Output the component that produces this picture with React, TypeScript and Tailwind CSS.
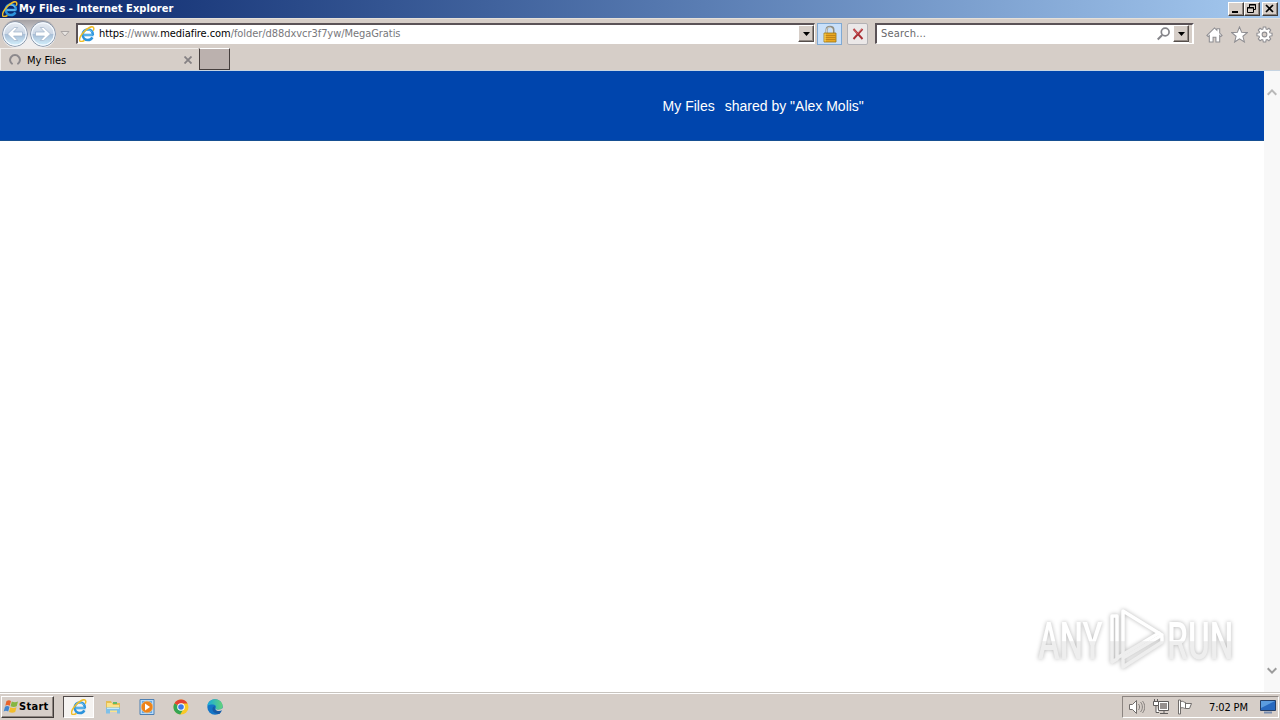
import React from 'react';
import { clsx } from 'clsx';

const ui = "font-['DejaVu_Sans_Condensed','DejaVu_Sans',sans-serif] text-[11px] leading-[14px] whitespace-pre";

const IELogo: React.FC<{ className?: string }> = ({ className }) => (
  <svg viewBox="0 0 16 16" className={className} fill="none">
    <path d="M3.400 9h11.100M13.400 11.300c-.9 1.700-2.500 2.700-4.500 2.700-3 0-5.200-2.200-5.200-5.200 0-3.100 2.200-5.300 5.200-5.300 2.900 0 4.900 2 5 5.500" stroke="#2c93dc" strokeWidth="2.500" />
    <path d="M4.200 7c.7-1.900 2.300-3.100 4.500-3.100 2 0 3.400.9 4.200 2.400M4.500 9h9" stroke="#8ad6f7" strokeWidth=".9" />
    <path d="M5.500 14.300c-2.300 1.400-4.200 1.500-4.700.5C.1 13.100 1.900 9 5.600 5.200 9.100 1.700 12.800.1 14.200 1.200c.8.7.7 2.100 0 3.600" stroke="#efbd28" strokeWidth="1.500" />
  </svg>
);

const NavArrow: React.FC<{ forward?: boolean }> = ({ forward }) => (
  <svg viewBox="0 0 26 26" className={clsx('size-[26px] shrink-0', forward && '-scale-x-100')}>
    <defs>
      <linearGradient id="orb" x1="0" y1="0" x2="0" y2="1">
        <stop offset="0" stopColor="#e9edf3" />
        <stop offset=".48" stopColor="#cdd8e6" />
        <stop offset=".52" stopColor="#a9bfd7" />
        <stop offset="1" stopColor="#d6f3ff" />
      </linearGradient>
    </defs>
    <circle cx="13" cy="13" r="12.300" fill="url(#orb)" stroke="#8592a5" />
    <circle cx="13" cy="13" r="11.200" fill="none" stroke="#f5faff" strokeWidth="1.200" />
    <path d="M5.500 13l6.800-6.500h3.400l-4.200 4.500h9v4h-9l4.200 4.500h-3.400z" fill="#fff" stroke="#9fb2c8" strokeWidth=".7" />
  </svg>
);

const DropButton = () => (
  <div className="flex h-[17px] w-4 shrink-0 items-center justify-center border border-t-white border-l-white border-r-[#554e4b] border-b-[#554e4b] bg-[#d6cec8] shadow-[inset_-1px_-1px_#938b86]">
    <svg viewBox="0 0 7 4" className="h-1 w-[7px]"><path d="M0 0h7L3.500 4z" fill="#000" /></svg>
  </div>
);

const WindowButton: React.FC<{ children: React.ReactNode; className?: string }> = ({ children, className }) => (
  <button className={clsx('h-[14px] w-4 border border-t-white border-l-white border-r-[#403b38] border-b-[#403b38] bg-[#d6cec8] shadow-[inset_-1px_-1px_#8d8580]', className)}>
    <svg viewBox="0 0 14 12" className="h-3 w-[14px]" fill="none" stroke="#000">{children}</svg>
  </button>
);

const TitleBar = () => (
  <header className="flex h-[18px] items-center bg-gradient-to-r from-[#0a246a] to-[#a6caf0] px-[2px]">
    <IELogo className="mr-px size-4" />
    <span className={clsx(ui, 'w-[160px] font-bold tracking-[0.06px] text-white')}>My Files - Internet Explorer</span>
    <div className="ml-auto flex">
      <WindowButton><path d="M3 9h6" strokeWidth="2" /></WindowButton>
      <WindowButton>
        <path d="M4.500 4V1.500h6v5H9M4 2h7M2.500 4.500h6v5h-6zM2 5h7" />
      </WindowButton>
      <WindowButton className="ml-[2px]"><path d="M3 2l7 7M10 2L3 9" strokeWidth="1.700" /></WindowButton>
    </div>
  </header>
);

const Lock = () => (
  <svg viewBox="0 0 16 18" className="h-[18px] w-4">
    <path d="M4.500 9V5c0-4.200 7-4.200 7 0v4" fill="none" stroke="#8d8c83" strokeWidth="2" />
    <path d="M4.500 8V5c0-3.600 6-3.600 6 0v3" fill="none" stroke="#f0efe5" strokeWidth=".7" />
    <path d="M2 8h12v9H2z" fill="#e9a824" stroke="#9b7313" strokeWidth=".8" />
    <path d="M2.500 10.500h11M2.500 12.500h11M2.500 14.500h11" stroke="#b87c15" strokeWidth=".8" />
    <path d="M3 8.500v8" stroke="#fbdc69" />
  </svg>
);

const Toolbar = () => (
  <div className="flex h-[30px] items-start border-t border-[#e5e0d9] pt-1">
    <div className="-mt-[3px] ml-[2px] flex h-7 gap-[2px] rounded-[14px] bg-gradient-to-b from-[#a5a2a5] to-[#f0eeee] to-70% pt-px">
      <NavArrow />
      <NavArrow forward />
    </div>
    <svg viewBox="0 0 10 6" className="mt-2 ml-[4px] h-[6px] w-[10px]"><path d="M1 .5h8l-4 4.500z" fill="#e8e4e1" stroke="#aaa5a4" /></svg>
    <div className="ml-[6px] flex h-[21px] w-[739px] border-t-2 border-r border-b border-l-2 border-t-[#5b5357] border-r-white border-b-white border-l-[#5b5357] bg-white">
      <IELogo className="mt-px ml-px size-4" />
      <span className={clsx(ui, 'mt-[2px] ml-1 tracking-[-0.06px] text-[#77777b]')}>
        <span className="text-black">https</span>://www.<span className="text-black">mediafire.com</span>/folder/d88dxvcr3f7yw/MegaGratis
      </span>
      <div className="ml-auto"><DropButton /></div>
    </div>
    <div className="ml-[2px] flex h-[22px] w-[25px] items-center justify-center border border-[#80a9d3] bg-[#c9e0fa]"><Lock /></div>
    <div className="ml-[5px] flex h-[22px] w-[21px] items-center justify-center rounded-[2px] border border-[#b3b1b4] bg-[#ebe8e8]">
      <svg viewBox="0 0 12 12" className="size-3" fill="none">
        <path d="M1.500 1l9 10M10.500 1l-9 10" stroke="#a92f35" strokeWidth="1.900" />
        <path d="M1.500 1l4 4.500L10 1" stroke="#df7474" strokeWidth=".8" />
      </svg>
    </div>
    <div className="ml-[7px] flex h-[21px] w-[319px] border-t-2 border-r-2 border-b border-l-2 border-t-[#5b5357] border-r-white border-b-white border-l-[#5b5357] bg-white">
      <span className={clsx(ui, 'mt-[2px] ml-1 tracking-[0.2px] text-[#68686b]')}>Search...</span>
      <svg viewBox="0 0 16 16" className="mt-px mr-px ml-auto size-4" fill="none" stroke="#85858a" strokeWidth="1.700">
        <circle cx="9.200" cy="6" r="3.900" />
        <path d="M6.200 9l-4.500 4.500" strokeWidth="2" />
      </svg>
      <DropButton />
      <div className="w-[3px] bg-[#d6cec8]" />
    </div>
    <div className="mt-[3px] ml-[12px] flex gap-2">
      <svg viewBox="0 0 18 18" className="size-[17px]" fill="#fff" stroke="#8e8d91" strokeWidth="1.100">
        <path d="M1 10l8-8 2.500 2.500V3h3v4.500L17 10l-1.300 1.200-1.200-1.200v7h-4v-5h-3v5h-4v-7l-1.200 1.200z" />
      </svg>
      <svg viewBox="0 0 18 18" className="size-[17px]" fill="#fff" stroke="#8e8d91" strokeWidth="1.100">
        <path d="M9 1l2.300 5.700 6 .3-4.700 3.900 1.600 6L9 13.500 3.800 17l1.600-6.100L.7 7l6-.3z" />
      </svg>
      <svg viewBox="0 0 18 18" className="size-[17px]" fill="#fff" stroke="#8e8d91" strokeWidth="1.100">
        <path d="M7.700 1h2.600l.4 2.300 1.100.4 1.900-1.300 1.900 1.900-1.300 1.900.4 1.100 2.300.4v2.600l-2.300.4-.4 1.100 1.300 1.900-1.900 1.900-1.900-1.300-1.100.4-.4 2.300H7.700l-.4-2.300-1.100-.4-1.900 1.300-1.900-1.900 1.300-1.900-.4-1.100L1 10.300V7.700l2.300-.4.4-1.100-1.300-1.900 1.900-1.900 1.900 1.300 1.100-.4z" />
        <circle cx="9" cy="9" r="2.500" fill="#d6cec8" />
      </svg>
    </div>
  </div>
);

const TabStrip = () => (
  <div className="flex h-[23px] border-b border-[#c6d4e2]">
    <div className="flex h-[22px] w-[198px] items-center border-t border-l border-[#f1eeeb] pt-px pl-2">
      <svg viewBox="0 0 12 12" className="size-3" fill="none">
        <path d="M3.600 10.200A4.900 4.900 0 1 1 8.400 10.200" stroke="#8c898c" strokeWidth="2" />
      </svg>
      <span className={clsx(ui, 'mt-px ml-[6px] text-black')}>My Files</span>
      <svg viewBox="0 0 8 8" className="mr-[6px] ml-auto size-2" stroke="#858184" strokeWidth="1.800"><path d="M.5.5l7 7M7.500.5l-7 7" /></svg>
    </div>
    <div className="ml-px h-[22px] w-[31px] border border-t-white border-r-[#453e3d] border-b-[#453e3d] border-l-[#453e3d] bg-[#bbb1ae]" />
  </div>
);

const Chevron: React.FC<{ down?: boolean }> = ({ down }) => (
  <svg viewBox="0 0 10 7" className={clsx('h-[7px] w-[10px]', down && 'rotate-180')} fill="none" stroke={down ? '#9c9c9c' : '#b8b8b8'} strokeWidth="2"><path d="M.7 5.700L5 1.400l4.300 4.300" /></svg>
);

const Watermark = () => (
  <svg viewBox="0 0 250 82" className="absolute right-0 bottom-[11px] h-[82px] w-[250px] [filter:drop-shadow(0_0_2px_#b5b5b5)]">
    <defs>
      <linearGradient id="mark" x1="0" y1="0" x2="0" y2="82" gradientUnits="userSpaceOnUse">
        <stop offset=".51" stopColor="#fff" />
        <stop offset=".52" stopColor="#eee" />
      </linearGradient>
      <linearGradient id="letters" x1="0" y1="-60" x2="0" y2="22" gradientUnits="userSpaceOnUse">
        <stop offset=".51" stopColor="#fff" />
        <stop offset=".52" stopColor="#eee" />
      </linearGradient>
    </defs>
    <g fill="url(#letters)" className="font-['Roboto','Liberation_Sans',sans-serif] text-[52px] font-medium">
      <text transform="translate(8 60) scale(.63 1)">ANY</text>
      <text transform="translate(137 60) scale(.64 1)">RUN</text>
    </g>
    <g fill="none" stroke="url(#mark)" strokeWidth="3.500" strokeLinejoin="round" strokeLinecap="round">
      <path d="M93 56V12l39 24-39 23" />
      <path d="M86 17h-4v46l5-3" />
      <path d="M87 17v42l42-25M93 68l39-25v-5M93 61v7" />
    </g>
  </svg>
);

const SharedFolder = () => (
  <main className="relative flex h-[621px] bg-white">
    <div className="flex-1">
      <div className="h-[70px] border-b border-[#164f92] bg-[#0045ad] pt-[26px] pl-[662.6px] font-['Liberation_Sans',Arial,sans-serif] text-[14px] leading-[18px] text-white">
        <span>My Files</span>
        <span className="ml-[10px]">shared by "Alex Molis"</span>
      </div>
    </div>
    <div className="flex w-4 flex-col items-center justify-between bg-[#f8f8f8] py-[18px]">
      <Chevron />
      <Chevron down />
    </div>
    <Watermark />
  </main>
);

const TaskbarIcons = () => (
  <div className="ml-[9px] flex items-center">
    <div className="flex h-[22px] w-[31px] items-center justify-center border border-t-[#514b4a] border-r-white border-b-white border-l-[#514b4a] bg-[#f5f3f1]">
      <IELogo className="size-4" />
    </div>
    <svg viewBox="0 0 18 18" className="ml-[10px] size-[18px]">
      <path d="M2 3h5l1 2h8v9H2z" fill="#e4bd52" />
      <path d="M3 5h5l1 2h6v7H3z" fill="#fbe38b" />
      <path d="M9 4h4v2H9z" fill="#61b969" />
      <path d="M2 9.500h14v6h-3v-3H6v3H2z" fill="#7fc0e8" />
      <path d="M3 10.500h12" stroke="#c5e9fb" />
    </svg>
    <svg viewBox="0 0 18 18" className="ml-[16px] size-[18px]">
      <path d="M2 1.500h14v15H2z" fill="#b6dafa" stroke="#4e80b3" />
      <path d="M4 3h10v12H4z" fill="#6baae4" />
      <circle cx="9" cy="9" r="5.800" fill="#ed8219" stroke="#f5ba70" strokeWidth=".7" />
      <path d="M7 5.500l5 3.500-5 3.500z" fill="#fff" />
    </svg>
    <svg viewBox="0 0 18 18" className="ml-[16px] size-[18px]">
      <circle cx="9" cy="9" r="7.500" fill="#f9c927" />
      <path d="M9 9L2.500 5.200a7.500 7.500 0 0 0 5.700 11.300l3.500-6z" fill="#35a553" />
      <path d="M9 9L2.500 5.200a7.500 7.500 0 0 1 13 .2H9z" fill="#e34133" />
      <circle cx="9" cy="9" r="3.800" fill="#fff" />
      <circle cx="9" cy="9" r="2.800" fill="#3d79e8" />
    </svg>
    <svg viewBox="0 0 18 18" className="ml-[16px] size-[18px]">
      <defs>
        <linearGradient id="wave" x1="0" y1="0" x2="1" y2="0">
          <stop stopColor="#18a9dd" />
          <stop offset="1" stopColor="#63d478" />
        </linearGradient>
      </defs>
      <circle cx="9" cy="9" r="7.700" fill="#1475c7" />
      <path d="M1.400 8C2-1 16-1 16.700 8c.1 2.500-2 3.800-4.200 3.800-2 0-3.500-.6-3-1.400 1-1.500.2-3.800-2.500-3.800C4 6.600 2 7.200 1.400 8z" fill="url(#wave)" />
      <path d="M9 8c-1.200 2.200.8 5 4 5 1.400 0 2.300-.3 3-.7L13.500 16C9 16 6 13.500 6.500 10.500 6.800 9 8 8 9 8z" fill="#175aa5" />
      <path d="M9.300 8.500c-1 2 .8 3.300 3.200 3.300 1.700 0 3-.5 4-1.700l1 2.200h-1.400c-.9.500-2 .8-3.200.8-2.800 0-4.500-2.500-3.600-4.600z" fill="#d6cec8" />
    </svg>
  </div>
);

const Tray = () => (
  <div className="mr-px ml-auto flex h-[22px] w-[157px] items-center border border-t-[#8c8581] border-r-white border-b-white border-l-[#8c8581] pl-[6px]">
    <svg viewBox="0 0 16 16" className="size-4" fill="none" stroke="#716d6b">
      <path d="M.5 5.500h3l4-4v13l-4-4h-3z" fill="#fff" />
      <path d="M9.500 5c1.500 2 1.500 4 0 6M11.500 3c2.500 3 2.500 7 0 10M13.500 2c3 4 3 8 0 12" strokeWidth=".8" />
    </svg>
    <svg viewBox="0 0 16 16" className="ml-2 size-4" stroke="#5e5b5a">
      <path d="M5.500 2.500h10v9h-10z" fill="#fff" />
      <path d="M7 4h7v6H7z" fill="#96908e" stroke="none" />
      <path d="M7 14.500h8M11 12v2" />
      <path d="M.5 2.500h5v4h-5zM1.500 0v2.500M4.500 0v2.500M3 6.500v7h3" fill="#fff" />
    </svg>
    <svg viewBox="0 0 16 16" className="ml-2 size-4" fill="#fff" stroke="#716d6b">
      <path d="M1.500 1h2v14h-2zM3.500 2.500c3-1 3 1 5 1v6c-2 0-2-1.500-5-.5zM8.500 4.500h6l-2 5h-4" />
    </svg>
    <span className={clsx(ui, 'mt-px ml-4 w-[46px] tracking-[-0.15px] text-black')}>7:02 PM</span>
    <svg viewBox="0 0 16 14" className="ml-[5px] h-[14px] w-4">
      <path d="M.5.500h15v10H.5z" fill="#2869bf" stroke="#253f67" />
      <path d="M1 1h14L1 8z" fill="#5b9cdf" />
      <path d="M4 12.500h8" stroke="#778caf" strokeWidth="2" />
    </svg>
  </div>
);

const Taskbar = () => (
  <footer className="flex h-7 items-center border-t border-[#c8c4bf] pt-px shadow-[inset_0_1px_white]">
    <button className="ml-px flex h-[22px] w-[53px] items-center border border-t-white border-r-[#403b38] border-b-[#403b38] border-l-white pl-px shadow-[inset_-1px_-1px_#8d8580]">
      <svg viewBox="0 0 16 16" className="size-4">
        <path d="M3.500 2c2-1 3-1 4.500 0L6.800 6.700c-2-1-3-1-4.500 0z" fill="#e9642b" />
        <path d="M8.800 2.500c2 1 4 1 6.200 0l-1.300 4.700c-2 1-4 1-6.200 0z" fill="#85b641" />
        <path d="M2 7.700c1.500-1 2.700-1 4.500 0l-1.300 4.800c-1.700-1-3-1-4.500 0z" fill="#4285cf" />
        <path d="M7.300 8.300c2 1 4 1 6.200 0l-1.300 4.800c-2 1-4 1-6.200 0z" fill="#f2bd2c" />
      </svg>
      <span className={clsx(ui, 'font-bold tracking-[0.3px] text-black')}>Start</span>
    </button>
    <TaskbarIcons />
    <Tray />
  </footer>
);

const App: React.FC = () => (
  <div className="h-[720px] w-[1280px] overflow-hidden bg-[#d6cec8]">
    <TitleBar />
    <Toolbar />
    <TabStrip />
    <SharedFolder />
    <Taskbar />
  </div>
);

export default App;
